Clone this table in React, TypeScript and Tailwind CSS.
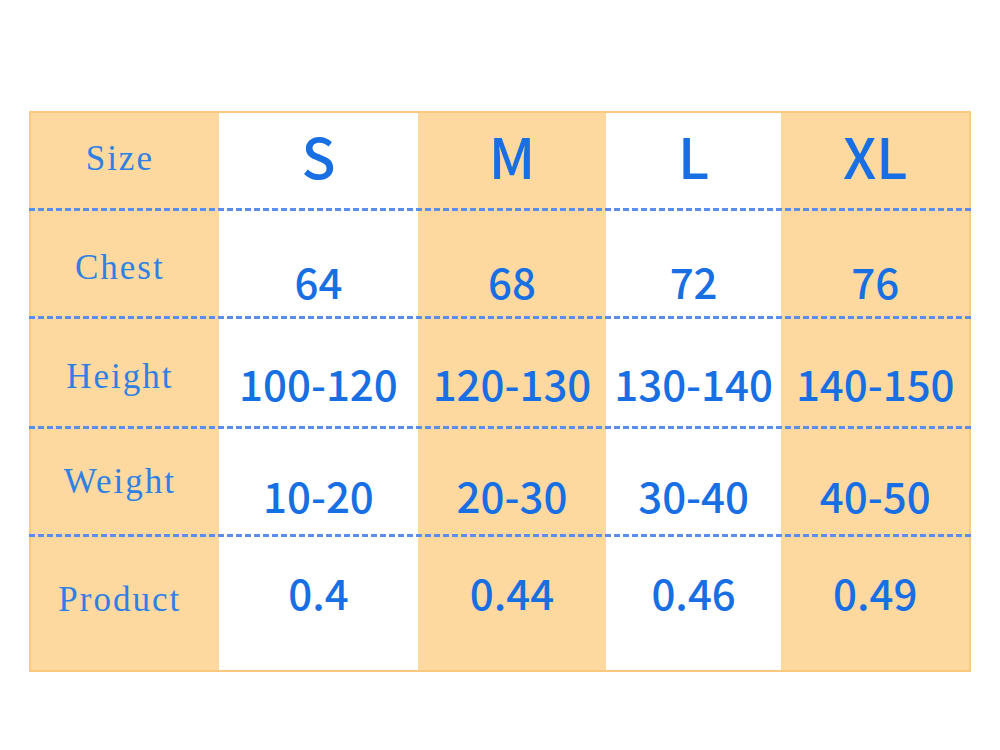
import React from "react";

type Row = {
  label: string;
  values: string[];
  height: string;
  labelPad: string;
  valuePad: string;
  valueSize: string;
};

const rows: Row[] = [
  { label: "Size", values: ["S", "M", "L", "XL"], height: "h-[96px]", labelPad: "pb-[4px]", valuePad: "pb-[12px]", valueSize: "text-[56px]" },
  { label: "Chest", values: ["64", "68", "72", "76"], height: "h-[108px]", labelPad: "pt-[10px]", valuePad: "pt-[36px]", valueSize: "text-[42px]" },
  { label: "Height", values: ["100-120", "120-130", "130-140", "140-150"], height: "h-[110px]", labelPad: "pt-[10px]", valuePad: "pt-[22px]", valueSize: "text-[42px]" },
  { label: "Weight", values: ["10-20", "20-30", "30-40", "40-50"], height: "h-[108px]", labelPad: "pt-[2px]", valuePad: "pt-[28px]", valueSize: "text-[42px]" },
  { label: "Product", values: ["0.4", "0.44", "0.46", "0.49"], height: "h-[135px]", labelPad: "pb-[4px]", valuePad: "pb-[22px]", valueSize: "text-[42px]" },
];

const colBg = ["bg-white", "bg-[#fdd9a0]", "bg-white", "bg-[#fdd9a0]"];
const colW = ["w-[200px]", "w-[188px]", "w-[176px]", "w-[188px]"];

const Dashes = () => (
  <div className="h-[3px] w-full bg-[repeating-linear-gradient(90deg,#5b8def_0_6px,transparent_6px_9px)]" />
);

export default function App() {
  return (
    <div className="w-[1000px] h-[750px] bg-white pt-[111px] pl-[29px]">
      <div className="w-[942px] border-2 border-[#f8c97f] bg-white">
        {rows.map((row, i) => (
          <div key={row.label}>
            {i > 0 && (
              <div className="relative h-0">
                <div className="absolute left-[-2px] right-[-2px] top-[-1px] z-10">
                  <Dashes />
                </div>
              </div>
            )}
            <div className={`flex ${row.height}`}>
              <div
                className={`w-[188px] bg-[#fdd9a0] flex items-center justify-center pr-[10px] ${row.labelPad} text-[35px] tracking-[2px] text-[#2f80e4] font-['Liberation_Serif',serif]`}
              >
                {row.label}
              </div>
              {row.values.map((v, j) => (
                <div
                  key={v}
                  className={`${colW[j]} ${colBg[j]} flex items-center justify-center ${row.valuePad} ${row.valueSize} font-medium text-[#176fe3] leading-none font-['Noto_Sans_CJK_SC','Open_Sans',sans-serif]`}
                >
                  {v}
                </div>
              ))}
            </div>
          </div>
        ))}
      </div>
    </div>
  );
}
